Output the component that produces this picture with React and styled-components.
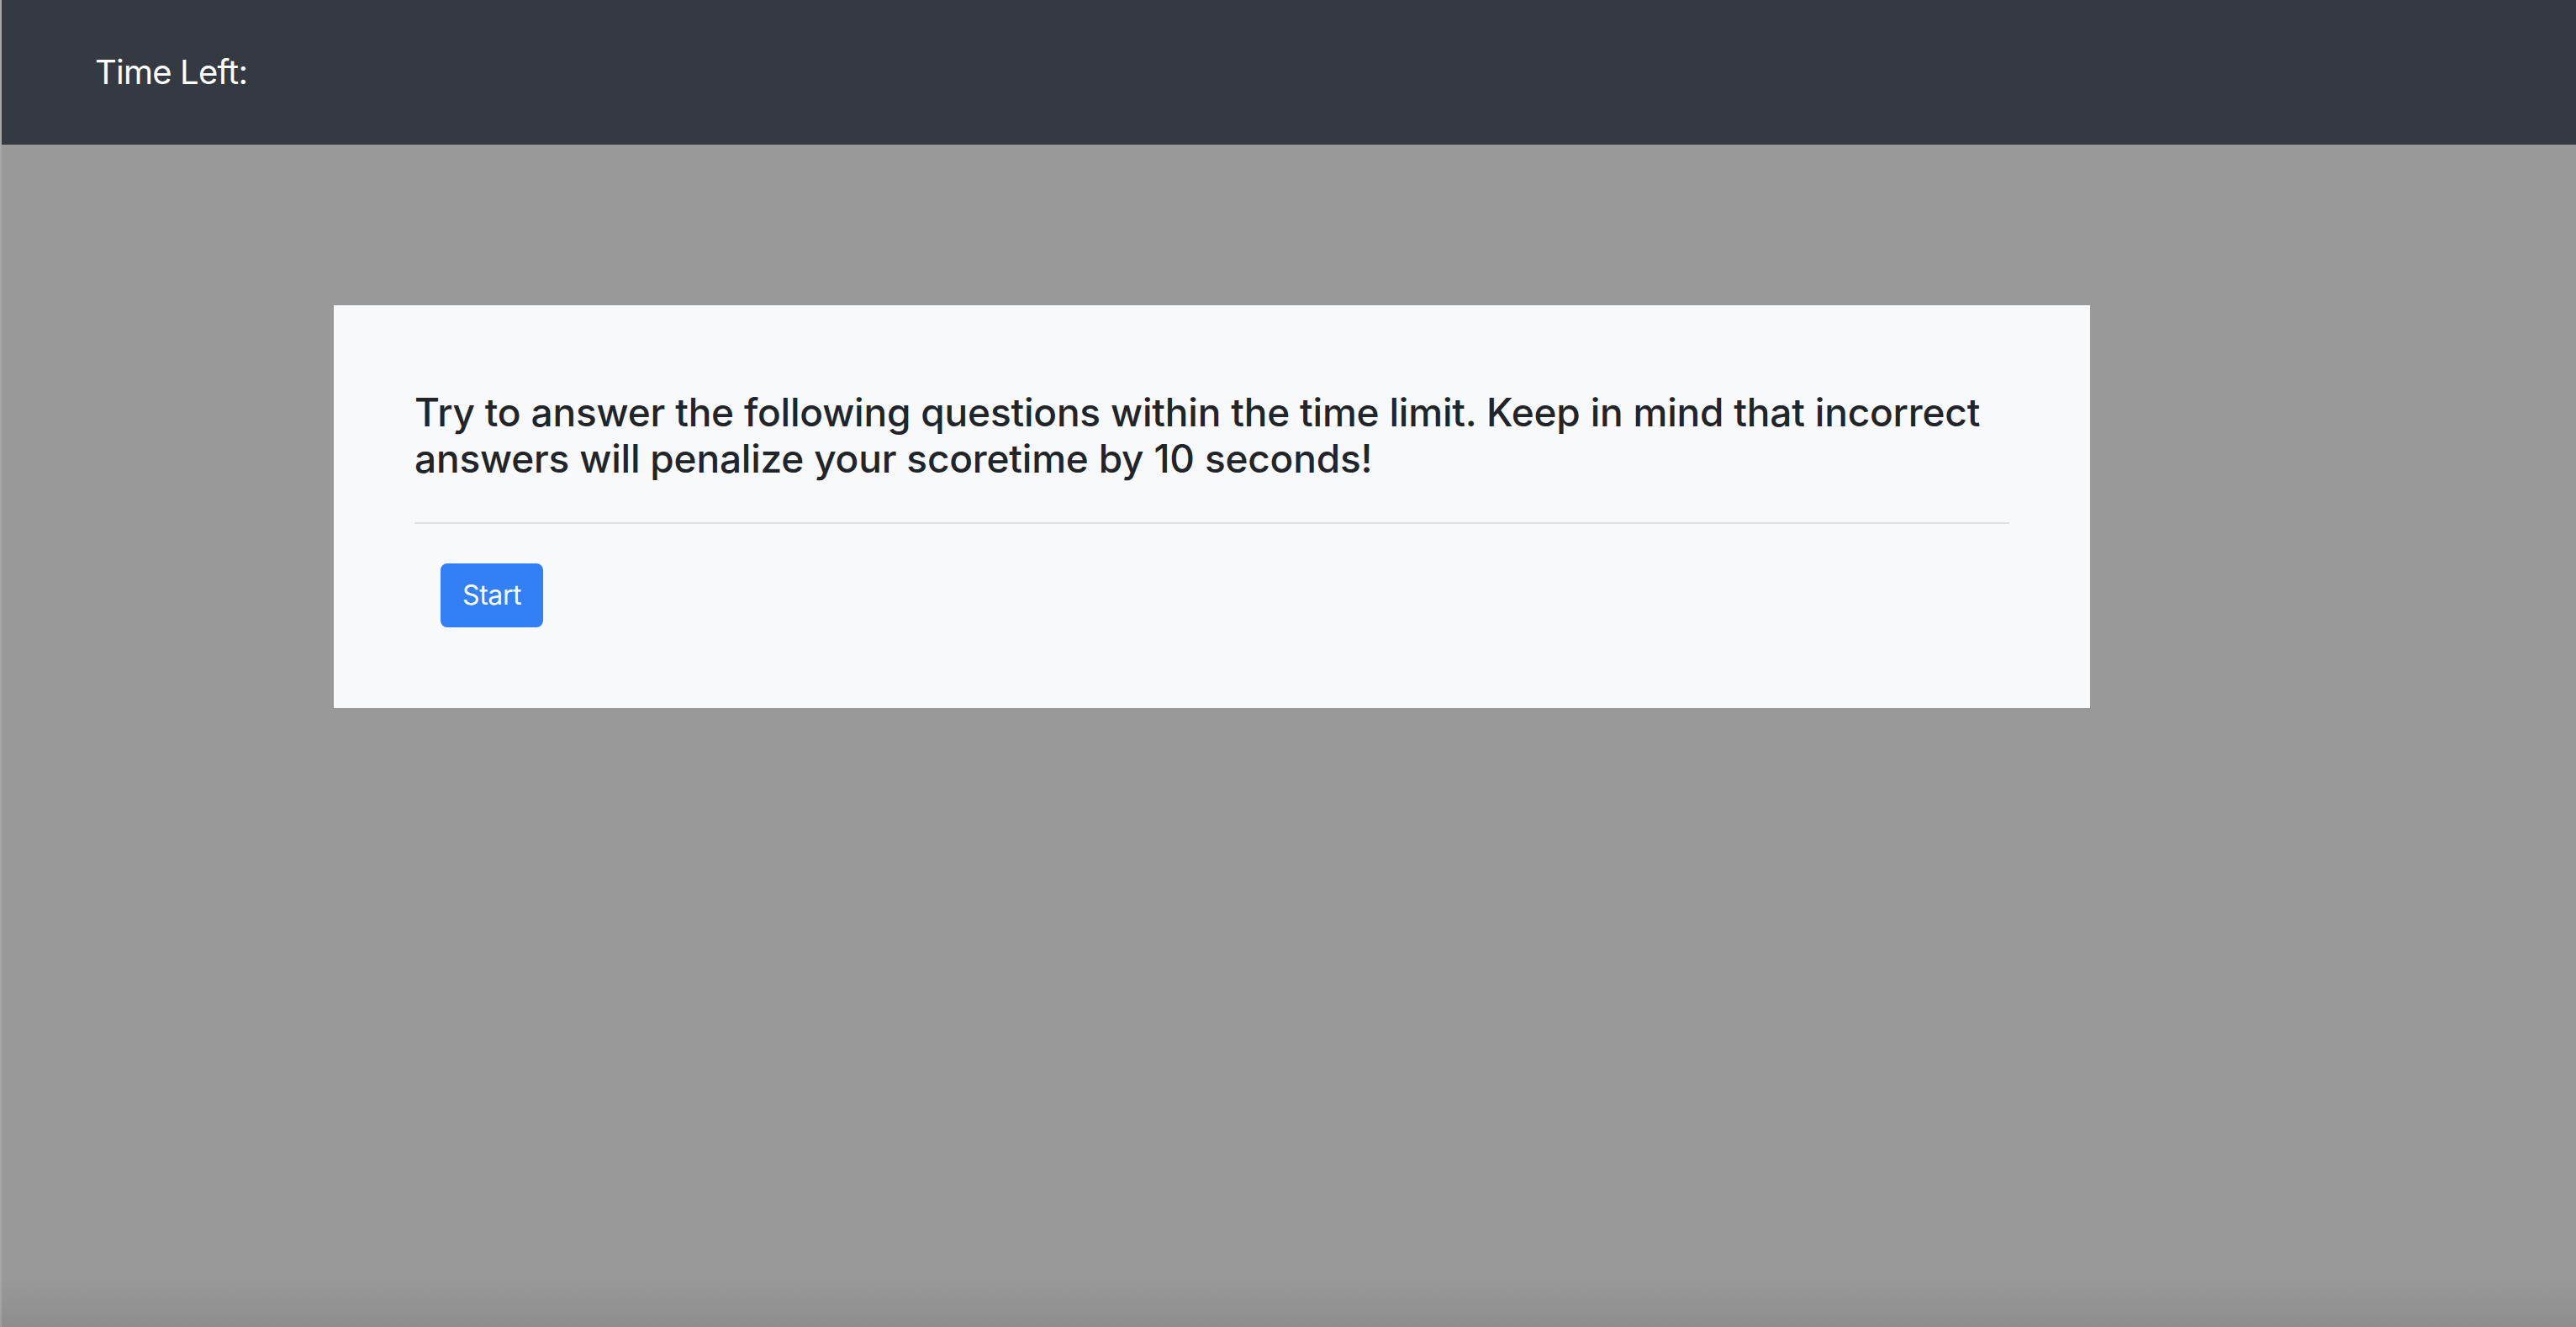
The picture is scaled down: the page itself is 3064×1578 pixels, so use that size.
import React from "react";
import styled, { createGlobalStyle } from "styled-components";

const GlobalStyle = createGlobalStyle`
  html, body {
    margin: 0;
    padding: 0;
    height: 100%;
  }
  body {
    background: #999999;
    font-family: Inter, "Noto Sans", sans-serif;
    color: #212529;
  }
  #root {
    min-height: 100%;
  }
`;

export default function App() {
  return (
    <>
      <GlobalStyle />
      <Page>
        <NavBar>
          <Brand>Time Left:</Brand>
        </NavBar>
        <Main>
          <Card>
            <Intro>
              Try to answer the following questions within the time limit. Keep in mind that
              incorrect answers will penalize your scoretime by 10 seconds!
            </Intro>
            <Rule />
            <Actions>
              <StartButton type="button">Start</StartButton>
            </Actions>
          </Card>
        </Main>
      </Page>
    </>
  );
}

const Page = styled.div`
  min-height: 1578px;
  display: flex;
  flex-direction: column;
  border-left: 2px solid rgba(255, 255, 255, 0.14);
  background: linear-gradient(to bottom, #999999 0, #999999 calc(100% - 60px), #8e8e8e 100%);
`;

const NavBar = styled.nav`
  height: 172px;
  box-sizing: border-box;
  background: #353a42;
  display: flex;
  align-items: center;
  padding: 0 111px;
`;

const Brand = styled.span`
  color: #ffffff;
  font-size: 40px;
  font-weight: 400;
  line-height: 1.5;
  letter-spacing: -0.8px;
`;

const Main = styled.main`
  flex: 1;
  padding: 191px 578px 0 395px;
`;

const Card = styled.section`
  background: #f8f9fa;
  padding: 100px 96px 96px;
  display: flex;
  flex-direction: column;
`;

const Intro = styled.h4`
  margin: 0 0 16px;
  font-size: 46px;
  font-weight: 500;
  line-height: 1.2;
  letter-spacing: -0.2px;
  color: #212529;
`;

const Rule = styled.hr`
  margin: 32px 0 0;
  border: 0;
  border-top: 2px solid #dee2e6;
`;

const Actions = styled.div`
  display: flex;
  padding: 47px 31px 0;
`;

const StartButton = styled.button`
  height: 76px;
  padding: 0 24px;
  border: 2px solid #337ff5;
  border-radius: 8px;
  background: #337ff5;
  color: #ffffff;
  font-family: Inter, "Noto Sans", sans-serif;
  font-size: 32px;
  font-weight: 400;
  line-height: 1.5;
  letter-spacing: -0.4px;
  cursor: pointer;
`;
